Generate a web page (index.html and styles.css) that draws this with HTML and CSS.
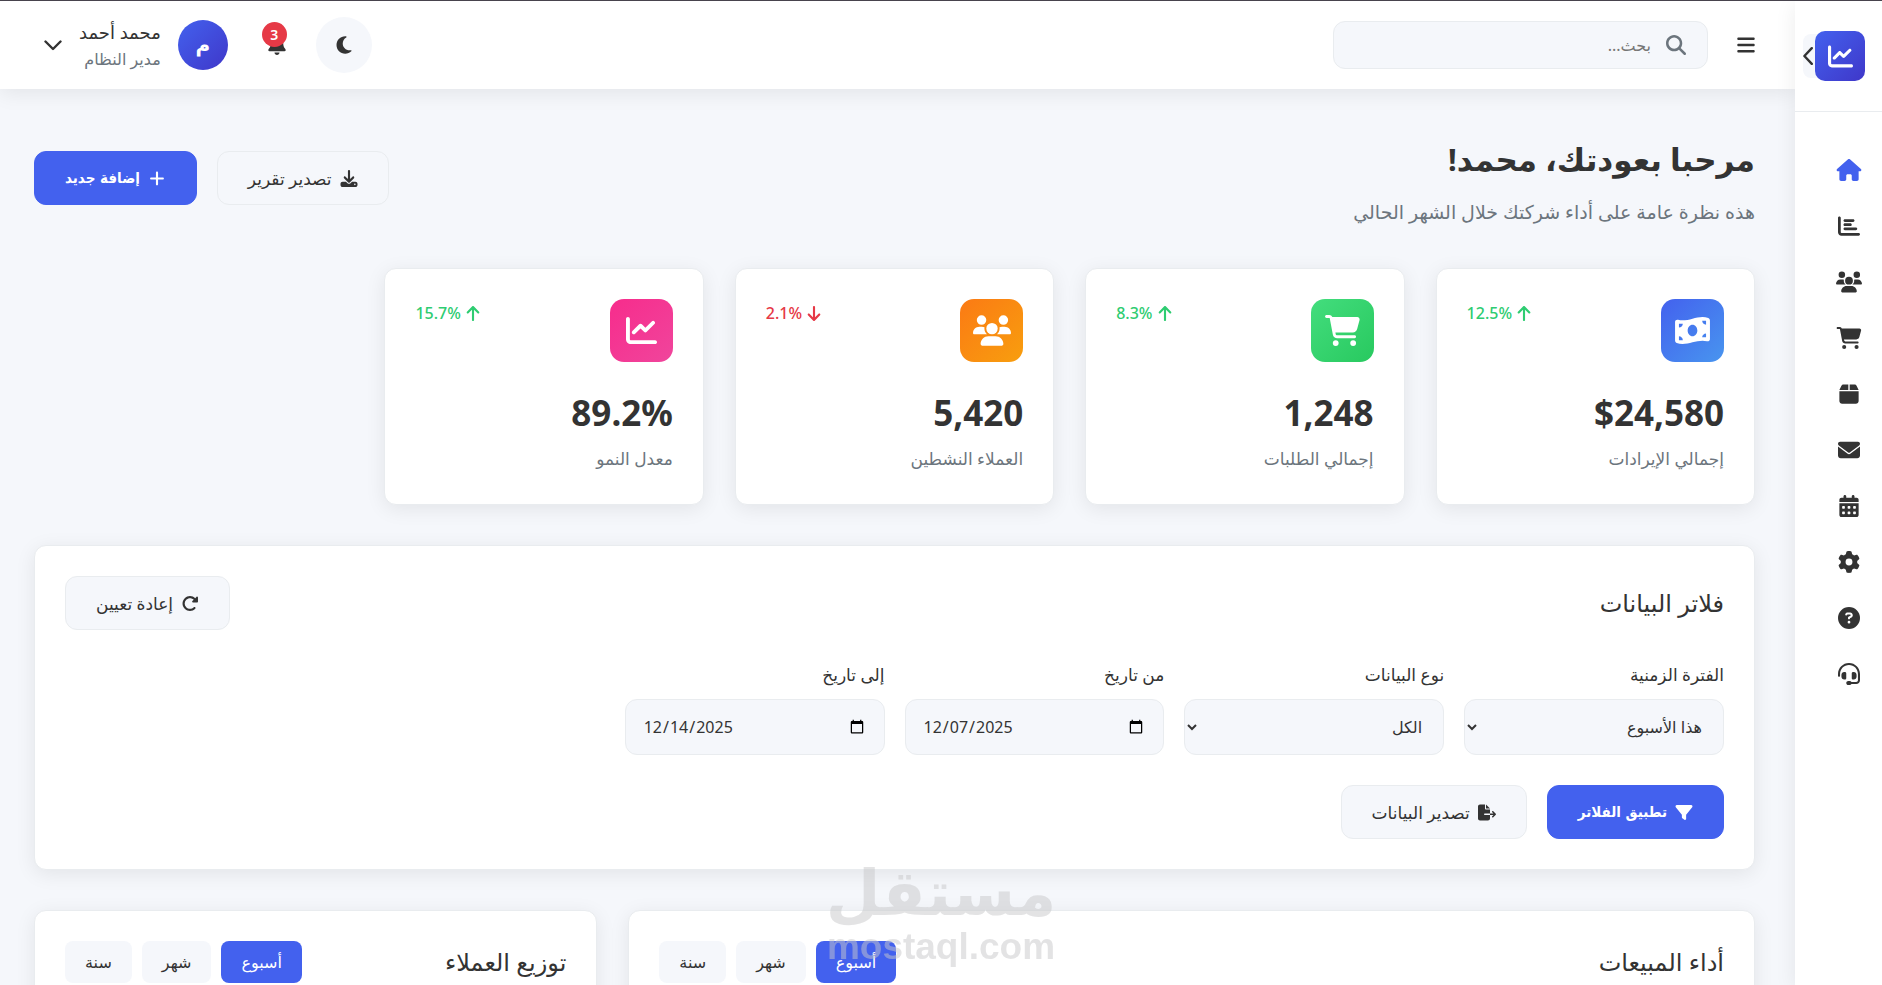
FILE: index.html
```html
<!DOCTYPE html>
<html lang="ar" dir="rtl">
  <head>
    <meta charset="UTF-8" />
    <meta name="viewport" content="width=device-width, initial-scale=1.0" />
    <title>لوحة التحكم</title>
    <link rel="stylesheet" href="styles.css">
  </head>
  <body>
    <svg class="sprite" aria-hidden="true">
      <symbol id="bars" viewBox="0 0 448 512"><path d="M0 96C0 78.3 14.3 64 32 64H416c17.7 0 32 14.3 32 32s-14.3 32-32 32H32C14.3 128 0 113.7 0 96zM0 256c0-17.7 14.3-32 32-32H416c17.7 0 32 14.3 32 32s-14.3 32-32 32H32c-17.7 0-32-14.3-32-32zM448 416c0 17.7-14.3 32-32 32H32c-17.7 0-32-14.3-32-32s14.3-32 32-32H416c17.7 0 32 14.3 32 32z"/></symbol>
      <symbol id="search" viewBox="0 0 512 512"><path d="M416 208c0 45.9-14.9 88.3-40 122.7L502.6 457.4c12.5 12.5 12.5 32.8 0 45.3s-32.8 12.5-45.3 0L330.7 376c-34.4 25.2-76.8 40-122.7 40C93.1 416 0 322.9 0 208S93.1 0 208 0S416 93.1 416 208zM208 352a144 144 0 1 0 0-288 144 144 0 1 0 0 288z"/></symbol>
      <symbol id="chart-line" viewBox="0 0 512 512"><path d="M64 64c0-17.7-14.3-32-32-32S0 46.3 0 64V400c0 44.2 35.8 80 80 80H480c17.7 0 32-14.3 32-32s-14.3-32-32-32H80c-8.8 0-16-7.2-16-16V64zm406.6 86.6c12.5-12.5 12.5-32.8 0-45.3s-32.8-12.5-45.3 0L320 210.7l-57.4-57.4c-12.5-12.5-32.8-12.5-45.3 0l-112 112c-12.5 12.5-12.5 32.8 0 45.3s32.8 12.5 45.3 0L240 221.3l57.4 57.4c12.5 12.5 32.8 12.5 45.3 0l128-128z"/></symbol>
      <symbol id="home" viewBox="0 0 576 512"><path d="M575.8 255.5c0 18-15 32.1-32 32.1h-32l.7 160.2c0 2.7-.2 5.4-.5 8.1V472c0 22.1-17.9 40-40 40H456c-1.1 0-2.2 0-3.3-.1c-1.4 .1-2.8 .1-4.2 .1H416 392c-22.1 0-40-17.9-40-40V448 384c0-17.7-14.3-32-32-32H256c-17.7 0-32 14.3-32 32v64 24c0 22.1-17.9 40-40 40H160 128.1c-1.5 0-3-.1-4.5-.2c-1.2 .1-2.4 .2-3.6 .2H104c-22.1 0-40-17.9-40-40V360c0-.9 0-1.9 .1-2.8V287.6H32c-18 0-32-14-32-32.1c0-9 3-17 10-24L266.4 8c7-7 15-8 22-8s15 2 21 7L564.8 231.5c8 7 12 15 11 24z"/></symbol>
      <symbol id="chart-bar" viewBox="0 0 512 512"><path d="M32 32c17.7 0 32 14.3 32 32V400c0 8.8 7.2 16 16 16H480c17.7 0 32 14.3 32 32s-14.3 32-32 32H80c-44.2 0-80-35.8-80-80V64C0 46.3 14.3 32 32 32zm96 96c0-17.7 14.3-32 32-32l192 0c17.7 0 32 14.3 32 32s-14.3 32-32 32l-192 0c-17.7 0-32-14.3-32-32zm32 64H288c17.7 0 32 14.3 32 32s-14.3 32-32 32H160c-17.7 0-32-14.3-32-32s14.3-32 32-32zm0 96H416c17.7 0 32 14.3 32 32s-14.3 32-32 32H160c-17.7 0-32-14.3-32-32s14.3-32 32-32z"/></symbol>
      <symbol id="users" viewBox="0 0 640 512"><path d="M144 0a80 80 0 1 1 0 160A80 80 0 1 1 144 0zM512 0a80 80 0 1 1 0 160A80 80 0 1 1 512 0zM0 298.7C0 239.8 47.8 192 106.7 192h42.7c15.9 0 31 3.5 44.6 9.7c-1.3 7.2-1.9 14.7-1.9 22.3c0 38.2 16.8 72.5 43.3 96c-.2 0-.4 0-.7 0H21.3C9.6 320 0 310.4 0 298.7zM405.3 320c-.2 0-.4 0-.7 0c26.6-23.5 43.3-57.8 43.3-96c0-7.6-.7-15-1.9-22.3c13.6-6.3 28.7-9.7 44.6-9.7h42.7C592.2 192 640 239.8 640 298.7c0 11.8-9.6 21.3-21.3 21.3H405.3zM224 224a96 96 0 1 1 192 0 96 96 0 1 1 -192 0zM128 485.3C128 411.7 187.7 352 261.3 352H378.7C452.3 352 512 411.7 512 485.3c0 14.7-11.9 26.7-26.7 26.7H154.7c-14.7 0-26.7-11.9-26.7-26.7z"/></symbol>
      <symbol id="cart" viewBox="0 0 576 512"><path d="M0 24C0 10.7 10.7 0 24 0H69.5c22 0 41.5 12.8 50.6 32h411c26.3 0 45.5 25 38.6 50.4l-41 152.3c-8.5 31.4-37 53.3-69.5 53.3H170.7l5.4 28.5c2.2 11.3 12.1 19.5 23.6 19.5H488c13.3 0 24 10.7 24 24s-10.7 24-24 24H199.7c-34.6 0-64.3-24.6-70.7-58.5L77.4 54.5c-.7-3.8-4-6.5-7.9-6.5H24C10.7 48 0 37.3 0 24zM128 464a48 48 0 1 1 96 0 48 48 0 1 1 -96 0zm336-48a48 48 0 1 1 0 96 48 48 0 1 1 0-96z"/></symbol>
      <symbol id="box" viewBox="0 0 448 512"><path d="M50.7 58.5L0 160H208V32H93.7C75.5 32 58.9 42.3 50.7 58.5zM240 160H448L397.3 58.5C389.1 42.3 372.5 32 354.3 32H240V160zm208 32H0V416c0 35.3 28.7 64 64 64H384c35.3 0 64-28.7 64-64V192z"/></symbol>
      <symbol id="envelope" viewBox="0 0 512 512"><path d="M48 64C21.5 64 0 85.5 0 112c0 15.1 7.1 29.3 19.2 38.4L236.8 313.6c11.4 8.5 27 8.5 38.4 0L492.8 150.4c12.1-9.1 19.2-23.3 19.2-38.4c0-26.5-21.5-48-48-48H48zM0 176V384c0 35.3 28.7 64 64 64H448c35.3 0 64-28.7 64-64V176L294.4 339.2c-22.8 17.1-54 17.1-76.8 0L0 176z"/></symbol>
      <symbol id="calendar" viewBox="0 0 448 512"><path d="M128 0c17.7 0 32 14.3 32 32V64H288V32c0-17.7 14.3-32 32-32s32 14.3 32 32V64h48c26.5 0 48 21.5 48 48v48H0V112C0 85.5 21.5 64 48 64H96V32c0-17.7 14.3-32 32-32zM0 192H448V464c0 26.5-21.5 48-48 48H48c-26.5 0-48-21.5-48-48V192zm64 80v32c0 8.8 7.2 16 16 16h32c8.8 0 16-7.2 16-16V272c0-8.8-7.2-16-16-16H80c-8.8 0-16 7.2-16 16zm128 0v32c0 8.8 7.2 16 16 16h32c8.8 0 16-7.2 16-16V272c0-8.8-7.2-16-16-16H208c-8.8 0-16 7.2-16 16zm144-16c-8.8 0-16 7.2-16 16v32c0 8.8 7.2 16 16 16h32c8.8 0 16-7.2 16-16V272c0-8.8-7.2-16-16-16H336zM64 400v32c0 8.8 7.2 16 16 16h32c8.8 0 16-7.2 16-16V400c0-8.8-7.2-16-16-16H80c-8.8 0-16 7.2-16 16zm144-16c-8.8 0-16 7.2-16 16v32c0 8.8 7.2 16 16 16h32c8.8 0 16-7.2 16-16V400c0-8.8-7.2-16-16-16H208zm112 16v32c0 8.8 7.2 16 16 16h32c8.8 0 16-7.2 16-16V400c0-8.8-7.2-16-16-16H336c-8.8 0-16 7.2-16 16z"/></symbol>
      <symbol id="gear" viewBox="0 0 512 512"><path d="M495.9 166.6c3.2 8.7 .5 18.4-6.4 24.6l-43.3 39.4c1.1 8.3 1.7 16.8 1.7 25.4s-.6 17.1-1.7 25.4l43.3 39.4c6.9 6.2 9.6 15.9 6.4 24.6c-4.4 11.9-9.7 23.3-15.8 34.3l-4.7 8.1c-6.6 11-14 21.4-22.1 31.2c-5.9 7.2-15.7 9.6-24.5 6.8l-55.7-17.7c-13.4 10.3-28.2 18.9-44 25.4l-12.5 57.1c-2 9.1-9 16.3-18.2 17.8c-13.8 2.3-28 3.5-42.5 3.5s-28.7-1.2-42.5-3.5c-9.2-1.5-16.2-8.7-18.2-17.8l-12.5-57.1c-15.8-6.5-30.6-15.1-44-25.4L83.1 425.9c-8.8 2.8-18.6 .3-24.5-6.8c-8.1-9.8-15.5-20.2-22.1-31.2l-4.7-8.1c-6.1-11-11.4-22.4-15.8-34.3c-3.2-8.7-.5-18.4 6.4-24.6l43.3-39.4C64.6 273.1 64 264.6 64 256s.6-17.1 1.7-25.4L22.4 191.2c-6.9-6.2-9.6-15.9-6.4-24.6c4.4-11.9 9.7-23.3 15.8-34.3l4.7-8.1c6.6-11 14-21.4 22.1-31.2c5.9-7.2 15.7-9.6 24.5-6.8l55.7 17.7c13.4-10.3 28.2-18.9 44-25.4l12.5-57.1c2-9.1 9-16.3 18.2-17.8C227.3 1.2 241.5 0 256 0s28.7 1.2 42.5 3.5c9.2 1.5 16.2 8.7 18.2 17.8l12.5 57.1c15.8 6.5 30.6 15.1 44 25.4l55.7-17.7c8.8-2.8 18.6-.3 24.5 6.8c8.1 9.8 15.5 20.2 22.1 31.2l4.7 8.1c6.1 11 11.4 22.4 15.8 34.3zM256 336a80 80 0 1 0 0-160 80 80 0 1 0 0 160z"/></symbol>
      <symbol id="question" viewBox="0 0 512 512"><path d="M256 512A256 256 0 1 0 256 0a256 256 0 1 0 0 512zM169.8 165.3c7.9-22.3 29.1-37.3 52.8-37.3h58.3c34.9 0 63.1 28.3 63.1 63.1c0 22.6-12.1 43.5-31.7 54.8L280 264.4c-.2 13-10.9 23.6-24 23.6c-13.3 0-24-10.7-24-24V250.5c0-8.6 4.6-16.5 12.1-20.8l44.3-25.4c4.7-2.7 7.6-7.7 7.6-13.1c0-8.4-6.8-15.1-15.1-15.1H222.6c-3.4 0-6.4 2.1-7.5 5.3l-.4 1.2c-4.4 12.5-18.2 19-30.6 14.6s-19-18.2-14.6-30.6l.4-1.2zM224 352a32 32 0 1 1 64 0 32 32 0 1 1 -64 0z"/></symbol>
      <symbol id="headset" viewBox="0 0 512 512"><path d="M256 48C141.1 48 48 141.1 48 256v40c0 13.3-10.7 24-24 24s-24-10.7-24-24V256C0 114.6 114.6 0 256 0S512 114.6 512 256V400.1c0 48.6-39.4 88-88.1 88L313.6 488c-8.3 14.3-23.8 24-41.6 24H240c-26.5 0-48-21.5-48-48s21.5-48 48-48h32c17.8 0 33.3 9.7 41.6 24l110.4 .1c22.1 0 40-17.9 40-40V256c0-114.9-93.1-208-208-208zM144 208h16c17.7 0 32 14.3 32 32V352c0 17.7-14.3 32-32 32H144c-35.3 0-64-28.7-64-64V272c0-35.3 28.7-64 64-64zm224 0c35.3 0 64 28.7 64 64v48c0 35.3-28.7 64-64 64H352c-17.7 0-32-14.3-32-32V240c0-17.7 14.3-32 32-32h16z"/></symbol>
      <symbol id="moon" viewBox="0 0 384 512"><path d="M223.5 32C100 32 0 132.3 0 256S100 480 223.5 480c60.6 0 115.5-24.2 155.8-63.4c5-4.9 6.3-12.5 3.1-18.7s-10.1-9.7-17-8.5c-9.8 1.7-19.8 2.6-30.1 2.6c-96.9 0-175.5-78.8-175.5-176c0-65.8 36-123.1 89.3-153.3c6.1-3.5 9.2-10.5 7.7-17.3s-7.3-11.9-14.3-12.5c-6.3-.5-12.6-.8-19-.8z"/></symbol>
      <symbol id="bell" viewBox="0 0 448 512"><path d="M224 0c-17.7 0-32 14.3-32 32V51.2C119 66 64 130.6 64 208v18.8c0 47-17.3 92.4-48.5 127.6l-7.4 8.3c-8.4 9.4-10.4 22.9-5.3 34.4S19.4 416 32 416H416c12.6 0 24-7.4 29.2-18.9s3.1-25-5.3-34.4l-7.4-8.3C401.3 319.2 384 273.9 384 226.8V208c0-77.4-55-142-128-156.8V32c0-17.7-14.3-32-32-32zm45.3 493.3c12-12 18.7-28.3 18.7-45.3H224 160c0 17 6.7 33.3 18.7 45.3s28.3 18.7 45.3 18.7s33.3-6.7 45.3-18.7z"/></symbol>
      <symbol id="chevron-down" viewBox="0 0 18 18"><path d="M1.5 5.5L9 13l7.5-7.5" fill="none" stroke="currentColor" stroke-width="2.4" stroke-linecap="round" stroke-linejoin="round"/></symbol>
      <symbol id="chevron-left" viewBox="0 0 10 18"><path d="M8.8 1.2L1.4 9l7.4 7.8" fill="none" stroke="currentColor" stroke-width="2.4" stroke-linecap="round" stroke-linejoin="round"/></symbol>
      <symbol id="download" viewBox="0 0 512 512"><path d="M288 32c0-17.7-14.3-32-32-32s-32 14.3-32 32V274.7l-73.4-73.4c-12.5-12.5-32.8-12.5-45.3 0s-12.5 32.8 0 45.3l128 128c12.5 12.5 32.8 12.5 45.3 0l128-128c12.5-12.5 12.5-32.8 0-45.3s-32.8-12.5-45.3 0L288 274.7V32zM64 352c-35.3 0-64 28.7-64 64v32c0 35.3 28.7 64 64 64H448c35.3 0 64-28.7 64-64V416c0-35.3-28.7-64-64-64H346.5l-45.3 45.3c-25 25-65.5 25-90.5 0L165.5 352H64zm368 56a24 24 0 1 1 0 48 24 24 0 1 1 0-48z"/></symbol>
      <symbol id="plus" viewBox="0 0 448 512"><path d="M256 80c0-17.7-14.3-32-32-32s-32 14.3-32 32V224H48c-17.7 0-32 14.3-32 32s14.3 32 32 32H192V432c0 17.7 14.3 32 32 32s32-14.3 32-32V288H400c17.7 0 32-14.3 32-32s-14.3-32-32-32H256V80z"/></symbol>
      <symbol id="filter" viewBox="0 0 512 512"><path d="M3.9 54.9C10.5 40.9 24.5 32 40 32H472c15.5 0 29.5 8.9 36.1 22.9s4.6 30.5-5.2 42.5L320 320.9V448c0 12.1-6.8 23.2-17.7 28.6s-23.8 4.3-33.5-3l-64-48c-8.1-6-12.8-15.5-12.8-25.6V320.9L9 97.3C-.7 85.4-2.8 68.8 3.9 54.9z"/></symbol>
      <symbol id="file-export" viewBox="0 0 576 512"><path d="M0 64C0 28.7 28.7 0 64 0H224V128c0 17.7 14.3 32 32 32H384V288H216c-13.3 0-24 10.7-24 24s10.7 24 24 24H384V448c0 35.3-28.7 64-64 64H64c-35.3 0-64-28.7-64-64V64zM384 336V288H494.1l-39-39c-9.4-9.4-9.4-24.6 0-33.9s24.6-9.4 33.9 0l80 80c9.4 9.4 9.4 24.6 0 33.9l-80 80c-9.4 9.4-24.6 9.4-33.9 0s-9.4-24.6 0-33.9l39-39H384zm0-208H256V0L384 128z"/></symbol>
      <symbol id="redo" viewBox="0 0 512 512"><path d="M463.5 224H472c13.3 0 24-10.7 24-24V72c0-9.7-5.8-18.5-14.8-22.2s-19.3-1.7-26.2 5.2L413.4 96.6c-87.6-86.5-228.7-86.2-315.8 1c-87.5 87.5-87.5 229.3 0 316.8s229.3 87.5 316.8 0c12.5-12.5 12.5-32.8 0-45.3s-32.8-12.5-45.3 0c-62.5 62.5-163.8 62.5-226.3 0s-62.5-163.8 0-226.3c62.2-62.2 162.7-62.5 225.3-1L327 183c-6.9 6.9-8.9 17.2-5.2 26.2s12.5 14.8 22.2 14.8H463.5z"/></symbol>
      <symbol id="arrow-up" viewBox="0 0 384 512"><path d="M214.6 41.4c-12.5-12.5-32.8-12.5-45.3 0l-160 160c-12.5 12.5-12.5 32.8 0 45.3s32.8 12.5 45.3 0L160 141.2V448c0 17.7 14.3 32 32 32s32-14.3 32-32V141.2L329.4 246.6c12.5 12.5 32.8 12.5 45.3 0s12.5-32.8 0-45.3l-160-160z"/></symbol>
      <symbol id="arrow-down" viewBox="0 0 384 512"><path transform="rotate(180 192 256)" d="M214.6 41.4c-12.5-12.5-32.8-12.5-45.3 0l-160 160c-12.5 12.5-12.5 32.8 0 45.3s32.8 12.5 45.3 0L160 141.2V448c0 17.7 14.3 32 32 32s32-14.3 32-32V141.2L329.4 246.6c12.5 12.5 32.8 12.5 45.3 0s12.5-32.8 0-45.3l-160-160z"/></symbol>
      <symbol id="money" viewBox="0 0 576 512"><path d="M0 112.5V422.3c0 18 10.1 35 27 41.3c87 32.5 174 10.3 261-11.9c79.8-20.3 159.6-40.7 239.3-18.9c23 6.3 48.7-9.5 48.7-33.4V89.7c0-18-10.1-35-27-41.3C462 15.9 375 38.1 288 60.3C208.2 80.6 128.4 100.9 48.7 79.1C25.6 72.8 0 88.6 0 112.5zM288 352c-44.2 0-80-43-80-96s35.8-96 80-96s80 43 80 96s-35.8 96-80 96zM64 352c35.3 0 64 28.7 64 64H64V352zm64-208c0 35.3-28.7 64-64 64V144h64zM512 304v64H448c0-35.3 28.7-64 64-64zM448 96h64v64c-35.3 0-64-28.7-64-64z"/></symbol>
    </svg>

    <!-- القائمة الجانبية -->
    <aside class="sidebar">
      <div class="sidebar-header">
        <a href="#" class="logo" aria-label="الرئيسية"><svg><use href="#chart-line"/></svg></a>
        <button class="sidebar-toggle" aria-label="طي القائمة"><svg><use href="#chevron-left"/></svg></button>
      </div>
      <nav class="sidebar-nav">
        <a href="#" class="active" aria-label="الرئيسية"><svg><use href="#home"/></svg></a>
        <a href="#" aria-label="التقارير"><svg><use href="#chart-bar"/></svg></a>
        <a href="#" aria-label="العملاء"><svg><use href="#users"/></svg></a>
        <a href="#" aria-label="الطلبات"><svg><use href="#cart"/></svg></a>
        <a href="#" aria-label="المنتجات"><svg><use href="#box"/></svg></a>
        <a href="#" aria-label="الرسائل"><svg><use href="#envelope"/></svg></a>
        <a href="#" aria-label="التقويم"><svg><use href="#calendar"/></svg></a>
        <a href="#" aria-label="الإعدادات"><svg><use href="#gear"/></svg></a>
        <a href="#" aria-label="المساعدة"><svg><use href="#question"/></svg></a>
        <a href="#" aria-label="الدعم"><svg><use href="#headset"/></svg></a>
      </nav>
    </aside>

    <div class="main">
      <header class="topbar">
        <div class="topbar-start">
          <button class="menu-btn" aria-label="القائمة"><svg><use href="#bars"/></svg></button>
          <div class="search-box">
            <svg><use href="#search"/></svg>
            <input type="text" placeholder="بحث..." aria-label="بحث" />
          </div>
        </div>
        <div class="topbar-end">
          <button class="theme-btn" aria-label="الوضع الليلي"><svg><use href="#moon"/></svg></button>
          <button class="bell-btn" aria-label="الإشعارات"><svg><use href="#bell"/></svg><span class="badge">3</span></button>
          <button class="user">
            <span class="avatar">م</span>
            <span class="user-info">
              <span class="user-name">محمد أحمد</span>
              <span class="user-role">مدير النظام</span>
            </span>
            <svg><use href="#chevron-down"/></svg>
          </button>
        </div>
      </header>

      <main class="content">
        <div class="page-header">
          <div>
            <h1>مرحبا بعودتك، محمد!</h1>
            <p>هذه نظرة عامة على أداء شركتك خلال الشهر الحالي</p>
          </div>
          <div class="actions">
            <button class="btn"><svg><use href="#download"/></svg>تصدير تقرير</button>
            <button class="btn btn-primary"><svg><use href="#plus"/></svg>إضافة جديد</button>
          </div>
        </div>

        <section class="stats">
          <div class="card stat">
            <div class="stat-top">
              <div class="stat-icon blue"><svg><use href="#money"/></svg></div>
              <div class="trend"><svg><use href="#arrow-up"/></svg><span>12.5%</span></div>
            </div>
            <div class="stat-value" dir="ltr">$24,580</div>
            <div class="stat-label">إجمالي الإيرادات</div>
          </div>
          <div class="card stat">
            <div class="stat-top">
              <div class="stat-icon green"><svg><use href="#cart"/></svg></div>
              <div class="trend"><svg><use href="#arrow-up"/></svg><span>8.3%</span></div>
            </div>
            <div class="stat-value" dir="ltr">1,248</div>
            <div class="stat-label">إجمالي الطلبات</div>
          </div>
          <div class="card stat">
            <div class="stat-top">
              <div class="stat-icon orange"><svg><use href="#users"/></svg></div>
              <div class="trend down"><svg><use href="#arrow-down"/></svg><span>2.1%</span></div>
            </div>
            <div class="stat-value" dir="ltr">5,420</div>
            <div class="stat-label">العملاء النشطين</div>
          </div>
          <div class="card stat">
            <div class="stat-top">
              <div class="stat-icon pink"><svg><use href="#chart-line"/></svg></div>
              <div class="trend"><svg><use href="#arrow-up"/></svg><span>15.7%</span></div>
            </div>
            <div class="stat-value" dir="ltr">89.2%</div>
            <div class="stat-label">معدل النمو</div>
          </div>
        </section>

        <section class="card filters">
          <div class="card-header">
            <h2>فلاتر البيانات</h2>
            <button class="btn"><svg><use href="#redo"/></svg>إعادة تعيين</button>
          </div>
          <div class="filter-grid">
            <div class="field">
              <label for="period">الفترة الزمنية</label>
              <select id="period"><option>هذا الأسبوع</option><option>هذا الشهر</option></select>
            </div>
            <div class="field">
              <label for="dataType">نوع البيانات</label>
              <select id="dataType"><option>الكل</option><option>المبيعات</option></select>
            </div>
            <div class="field">
              <label for="fromDate">من تاريخ</label>
              <input type="date" id="fromDate" value="2025-12-07" />
            </div>
            <div class="field">
              <label for="toDate">إلى تاريخ</label>
              <input type="date" id="toDate" value="2025-12-14" />
            </div>
          </div>
          <div class="actions">
            <button class="btn btn-primary"><svg><use href="#filter"/></svg>تطبيق الفلاتر</button>
            <button class="btn"><svg><use href="#file-export"/></svg>تصدير البيانات</button>
          </div>
        </section>

        <section class="charts">
          <div class="card chart">
            <div class="card-header">
              <h2>أداء المبيعات</h2>
              <div class="tabs">
                <button class="active">أسبوع</button>
                <button>شهر</button>
                <button>سنة</button>
              </div>
            </div>
          </div>
          <div class="card chart">
            <div class="card-header">
              <h2>توزيع العملاء</h2>
              <div class="tabs">
                <button class="active">أسبوع</button>
                <button>شهر</button>
                <button>سنة</button>
              </div>
            </div>
          </div>
        </section>
      </main>
    </div>

    <div class="watermark">
      <span class="watermark-ar">مستقل</span>
      <span class="watermark-en">mostaql.com</span>
    </div>
  </body>
</html>
```
FILE: styles.css
```css
:root {
  --primary: #4361ee;
  --dark: #333333;
  --gray: #6c757d;
  --light: #f5f7fb;
  --border: #e9ecef;
  --shadow: 0 4px 20px rgba(0, 0, 0, 0.08);
}
* {
  margin: 0;
  padding: 0;
  box-sizing: border-box;
}
body {
  font-family: "Segoe UI", "Noto Sans", "Open Sans", "DejaVu Sans", sans-serif;
  font-size: 16px;
  color: var(--dark);
  background-color: var(--light);
  border-top: 1px solid #47434d;
  height: 100vh;
  overflow: hidden;
  display: flex;
}
button,
input,
select {
  font-family: inherit;
  color: inherit;
}
button {
  border: none;
  background: none;
  cursor: pointer;
}
svg {
  fill: currentColor;
  flex-shrink: 0;
}
.sprite {
  display: none;
}

/* sidebar */
.sidebar {
  width: 87px;
  flex-shrink: 0;
  background: white;
  box-shadow: var(--shadow);
  z-index: 3;
}
.sidebar-header {
  height: 111px;
  padding: 30px 17px;
  display: flex;
  align-items: center;
  border-bottom: 1px solid var(--border);
}
.logo {
  width: 50px;
  height: 50px;
  border-radius: 10px;
  background: linear-gradient(135deg, #4361ee, #3f37c9);
  color: white;
  display: flex;
  align-items: center;
  justify-content: center;
  flex-shrink: 0;
  z-index: 1;
}
.logo svg {
  width: 25px;
  height: 25px;
}
.sidebar-toggle {
  width: 20px;
  height: 44px;
  margin-right: -8px;
  border-radius: 8px;
  background: var(--light);
  flex-shrink: 0;
  display: flex;
  align-items: center;
  justify-content: flex-end;
}
.sidebar-toggle svg {
  width: 10px;
  height: 18px;
}
.sidebar-nav {
  padding-top: 30px;
}
.sidebar-nav a {
  height: 56px;
  padding-right: 20px;
  color: var(--dark);
  display: flex;
  align-items: center;
}
.sidebar-nav a.active {
  color: var(--primary);
}
.sidebar-nav svg {
  width: 26px;
  height: 22px;
}

/* top bar */
.main {
  flex: 1;
  min-width: 0;
}
.topbar {
  height: 88px;
  padding: 0 40px 0 44px;
  background: white;
  box-shadow: var(--shadow);
  display: flex;
  align-items: center;
  justify-content: space-between;
}
.topbar-start {
  display: flex;
  align-items: center;
  gap: 29px;
}
.menu-btn svg {
  display: block;
  width: 18px;
  height: 20px;
}
.search-box {
  width: 375px;
  height: 48px;
  padding: 0 21px;
  border: 1px solid var(--border);
  border-radius: 12px;
  background: var(--light);
  display: flex;
  align-items: center;
  gap: 15px;
}
.search-box svg {
  width: 20px;
  height: 20px;
  color: var(--gray);
}
.search-box input {
  flex: 1;
  min-width: 0;
  border: none;
  outline: none;
  background: none;
  font-size: 16px;
}
.topbar-end {
  display: flex;
  align-items: center;
}
.theme-btn {
  width: 56px;
  height: 56px;
  border-radius: 50%;
  background: var(--light);
  display: flex;
  align-items: center;
  justify-content: center;
}
.theme-btn svg {
  width: 16px;
  height: 20px;
}
.bell-btn {
  position: relative;
  margin: 0 30px 0 40px;
}
.bell-btn svg {
  display: block;
  width: 18px;
  height: 20px;
}
.badge {
  position: absolute;
  top: -13px;
  right: -1px;
  width: 25px;
  height: 25px;
  border-radius: 50%;
  background: #e63946;
  color: white;
  font-size: 14px;
  font-weight: 600;
  line-height: 25px;
  text-align: center;
}
.user {
  display: flex;
  align-items: center;
  gap: 17px;
}
.user svg {
  width: 18px;
  height: 18px;
}
.avatar {
  width: 50px;
  height: 50px;
  border-radius: 50%;
  background: linear-gradient(135deg, #4361ee, #3f37c9);
  color: white;
  font-size: 20px;
  font-weight: bold;
  line-height: 50px;
  text-align: center;
}
.user-info {
  display: flex;
  flex-direction: column;
  text-align: right;
}
.user-name {
  font-size: 18px;
  font-weight: 500;
  line-height: 28px;
}
.user-role {
  font-size: 16px;
  line-height: 26px;
  color: var(--gray);
}

/* content */
.content {
  padding: 36px 40px 0 34px;
}
.page-header {
  display: flex;
  align-items: center;
  justify-content: space-between;
  margin-bottom: 37px;
}
.page-header h1 {
  font-size: 31px;
  line-height: 68px;
}
.page-header p {
  font-size: 19px;
  line-height: 38px;
  color: var(--gray);
}
.actions {
  display: flex;
  gap: 20px;
}
.btn {
  height: 54px;
  padding: 0 30px;
  border: 1px solid var(--border);
  border-radius: 12px;
  background: var(--light);
  font-size: 17px;
  font-weight: 500;
  white-space: nowrap;
  display: flex;
  align-items: center;
  gap: 8px;
}
.btn svg {
  width: 18px;
  height: 17px;
}
.btn-primary {
  background: var(--primary);
  border-color: var(--primary);
  color: white;
  font-family: "DejaVu Sans Condensed", "DejaVu Sans", sans-serif;
  font-size: 15px;
  font-weight: 600;
}
.card {
  background: white;
  border: 1px solid var(--border);
  border-radius: 12px;
  box-shadow: var(--shadow);
  padding: 30px;
}
.stats {
  display: grid;
  grid-template-columns: repeat(auto-fill, minmax(280px, 1fr));
  gap: 31px;
  margin-bottom: 40px;
}
.stat-top {
  display: flex;
  justify-content: space-between;
  margin-bottom: 20px;
}
.stat-icon {
  width: 63px;
  height: 63px;
  border-radius: 14px;
  color: white;
  display: flex;
  align-items: center;
  justify-content: center;
}
.stat-icon svg {
  width: 35px;
  height: 31px;
}
.blue {
  background: linear-gradient(135deg, #4361ee, #4895ef);
}
.green {
  background: linear-gradient(135deg, #43dd7d, #28c95f);
}
.orange {
  background: linear-gradient(135deg, #fb7a14, #f89e0e);
}
.orange svg {
  width: 38px;
}
.pink {
  background: linear-gradient(135deg, #f72c8c, #f0459c);
}
.trend {
  height: 28px;
  display: flex;
  align-items: center;
  gap: 5px;
  font-size: 16px;
  font-weight: 500;
  color: #2ecc71;
}
.trend svg {
  width: 14px;
  height: 17px;
}
.trend.down {
  color: #e63946;
}
.stat-value {
  font-size: 35px;
  font-weight: bold;
  line-height: 61px;
  text-align: right;
}
.stat-label {
  font-size: 17px;
  line-height: 31px;
  color: var(--gray);
}

/* filters */
.filters {
  margin-bottom: 40px;
}
.card-header {
  display: flex;
  align-items: center;
  justify-content: space-between;
}
.card-header h2 {
  font-size: 24px;
  font-weight: 500;
  line-height: 42px;
}
.filters .card-header {
  margin-bottom: 30px;
}
.filter-grid {
  display: grid;
  grid-template-columns: repeat(auto-fill, minmax(240px, 1fr));
  gap: 20px;
  margin-bottom: 30px;
}
.field label {
  display: block;
  margin-bottom: 10px;
  font-size: 17px;
  font-weight: 500;
  line-height: 29px;
}
.field select,
.field input {
  width: 100%;
  height: 56px;
  padding: 0 17px;
  border: 1px solid var(--border);
  border-radius: 12px;
  background-color: var(--light);
  font-size: 16px;
}
.field input {
  direction: ltr;
}

/* charts */
.charts {
  display: grid;
  grid-template-columns: 2fr 1fr;
  gap: 31px;
}
.chart {
  min-height: 400px;
}
.tabs {
  display: flex;
  gap: 10px;
}
.tabs button {
  height: 42px;
  padding: 0 20px;
  border-radius: 8px;
  background: var(--light);
  font-size: 16px;
}
.tabs button.active {
  background: var(--primary);
  color: white;
}

.watermark {
  position: fixed;
  bottom: 17px;
  left: 50%;
  transform: translateX(-50%);
  z-index: 5;
  display: flex;
  flex-direction: column;
  align-items: center;
  color: #c8c8ca;
  opacity: 0.5;
  font-weight: bold;
  pointer-events: none;
}
.watermark-ar {
  font-family: "DejaVu Sans", sans-serif;
  font-size: 63px;
  line-height: 64px;
}
.watermark-en {
  font-family: "Liberation Sans", Arial, sans-serif;
  font-size: 37px;
  line-height: 42px;
}
```
